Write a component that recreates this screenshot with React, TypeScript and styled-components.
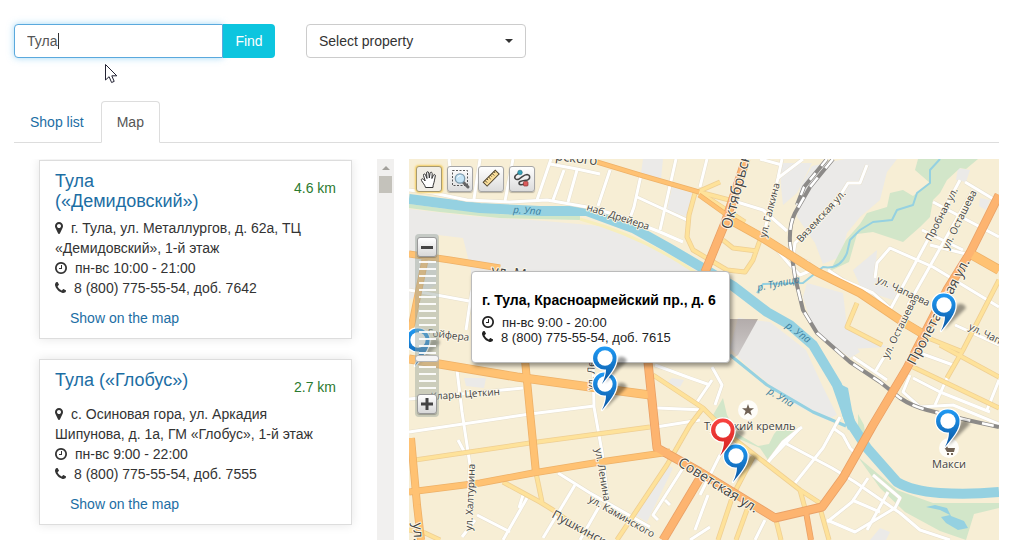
import React from 'react';
import styled, { createGlobalStyle } from 'styled-components';

const Global = createGlobalStyle`
  * { box-sizing: border-box; }
  body {
    margin: 0;
    background: #fff;
    color: #333;
    font: 14px/20px "Liberation Sans", Arial, sans-serif;
  }
  a { color: #1c6ea4; text-decoration: none; }
`;

const Page = styled.main`
  position: relative;
  padding: 24px 16px 15px 14px;
`;

const Filters = styled.form`
  display: flex;
  gap: 31px;
  margin-bottom: 43px;
`;

const SearchGroup = styled.div`
  position: relative;
  display: flex;
`;

const SearchInput = styled.input`
  width: 209px;
  height: 34px;
  padding: 6px 12px;
  border: 1px solid #5aa9dd;
  border-radius: 4px 0 0 4px;
  box-shadow: 0 0 7px rgba(102, 190, 240, 0.6);
  color: #555;
  font: inherit;
  outline: none;
`;

const TextCaret = styled.span`
  position: absolute;
  top: 9px;
  left: 44px;
  width: 1px;
  height: 16px;
  background: #333;
`;

const FindButton = styled.button`
  position: relative;
  width: 52px;
  height: 34px;
  padding: 0;
  border: 0;
  border-radius: 0 4px 4px 0;
  background: #0dc5df;
  color: #fff;
  font: inherit;
`;

const SelectBox = styled.div`
  position: relative;
  width: 220px;
`;

const Select = styled.select`
  width: 100%;
  height: 34px;
  padding: 6px 12px;
  border: 1px solid #ccc;
  border-radius: 4px;
  background: #fff;
  color: #333;
  font: inherit;
  appearance: none;
`;

const SelectArrow = styled.span`
  position: absolute;
  top: 15px;
  right: 13px;
  border: 4px solid transparent;
  border-top-color: #333;
  border-bottom: 0;
  pointer-events: none;
`;

const Pointer = styled.svg`
  position: absolute;
  top: 63px;
  left: 104px;
`;

const Tabs = styled.nav`
  display: flex;
  gap: 1px;
  margin-bottom: 16px;
  border-bottom: 1px solid #ddd;
`;

const Tab = styled.a<{ $active?: boolean }>`
  margin-bottom: -1px;
  padding: 10px 15px;
  border: 1px solid ${p => (p.$active ? '#ddd' : 'transparent')};
  border-bottom-color: ${p => (p.$active ? '#fff' : 'transparent')};
  border-radius: 4px 4px 0 0;
  color: ${p => (p.$active ? '#555' : '#1c6ea4')};
`;

const Content = styled.div`
  display: flex;
  gap: 15px;
  height: 381px;
`;

const ListPane = styled.section`
  display: flex;
  flex: 0 0 380px;
  overflow: hidden;
`;

const Cards = styled.div`
  display: flex;
  flex: 1;
  flex-direction: column;
  gap: 20px;
  padding: 1px 25px 0;
`;

const Card = styled.article`
  padding: 10px 15px;
  border: 1px solid #ddd;
  box-shadow: 0 0 10px rgba(0, 0, 0, 0.1);
`;

const CardHead = styled.header`
  display: flex;
  align-items: flex-start;
  justify-content: space-between;
  padding-bottom: 7px;
`;

const CardTitle = styled.h2`
  width: 180px;
  margin: 0;
  color: #1c6ea4;
  font-size: 18px;
  font-weight: 400;
  line-height: 20px;
`;

const Distance = styled.span`
  margin-top: 7px;
  color: #2b7a30;
`;

const Line = styled.p`
  margin: 0;
`;

const Icon = styled.svg`
  height: 14px;
  margin-right: 8px;
  fill: currentColor;
  vertical-align: -2px;
`;

const ShowLink = styled.a`
  display: block;
  margin-top: 10px;
  padding-left: 15px;
`;

const ScrollTrack = styled.div`
  display: flex;
  flex: 0 0 17px;
  flex-direction: column;
  align-items: center;
  gap: 6px;
  padding-top: 7px;
  background: #f1f0ef;
`;

const ScrollArrow = styled.span`
  border: 4px solid transparent;
  border-top: 0;
  border-bottom-color: #a3a19c;
`;

const ScrollThumb = styled.span`
  width: 13px;
  height: 17px;
  background: #c4c2bb;
`;

const MapPane = styled.section`
  position: relative;
  flex: 1;
  min-width: 0;
  overflow: hidden;
`;

const MapLayer = styled.svg`
  position: absolute;
  inset: 0;
  width: 100%;
  height: 100%;
  pointer-events: none;
  font-family: "Open Sans", "Noto Sans", sans-serif;
`;

const Toolbar = styled.div`
  position: absolute;
  top: 7px;
  left: 7px;
  display: flex;
  gap: 5px;
`;

const ToolButton = styled.button<{ $active?: boolean }>`
  width: 26px;
  height: 26px;
  padding: 0;
  border: 1px solid ${p => (p.$active ? '#a89a70' : '#a6a6a6')};
  border-radius: 3px;
  background: ${p => (p.$active ? '#f1eee6' : 'linear-gradient(#fff, #dcdcdc)')};
  box-shadow: ${p => (p.$active ? '0 0 2px 1px #f5cf63' : '0 1px 1px rgba(0, 0, 0, 0.25)')};
  svg { display: block; }
`;

const ZoomBar = styled.div`
  position: absolute;
  top: 75px;
  left: 6px;
  display: flex;
  flex-direction: column;
  align-items: center;
  width: 24px;
  padding: 3px 0;
  border-radius: 4px;
  background: rgba(150, 165, 155, 0.45);
`;

const ZoomButton = styled.button`
  width: 20px;
  height: 20px;
  padding: 0;
  border: 1px solid #999;
  border-radius: 3px;
  background: linear-gradient(#fff, #d8d8d8);
  box-shadow: 0 1px 1px rgba(0, 0, 0, 0.25);
  svg { display: block; }
`;

const ZoomRange = styled.input`
  width: 24px;
  height: 137px;
  margin: 0;
  appearance: none;
  writing-mode: vertical-lr;
  background: repeating-linear-gradient(
    transparent 0 4px, rgba(255, 255, 255, 0.9) 4px 6px, transparent 6px 7px
  ) center / 17px 100% no-repeat;
  &::-webkit-slider-thumb {
    appearance: none;
    width: 24px;
    height: 7px;
    border: 1px solid #b5b5b5;
    border-radius: 3px;
    background: #f4f4f4;
  }
`;

const Balloon = styled.div`
  position: absolute;
  top: 112px;
  left: 62px;
  width: 259px;
  padding: 19px 10px 17px;
  border: 1px solid #bbb;
  border-radius: 4px;
  background: #fff;
  box-shadow: 2px 3px 4px rgba(0, 0, 0, 0.4);
  color: #222;
  font-size: 13px;
  line-height: 15px;
  white-space: nowrap;
`;

const BalloonTitle = styled.h3`
  margin: 0 0 6px;
  color: #000;
  font-size: 14px;
  line-height: 18px;
`;

const MARKER =
  'M1152 640q0-106-75-181t-181-75-181 75-75 181 75 181 181 75 181-75 75-181zm256 0q0 109-33 179l-364 774q-16 33-47.5 52t-67.5 19-67.5-19-46.5-52l-365-774q-33-70-33-179 0-212 150-362t362-150 362 150 150 362z';
const CLOCK =
  'M1024 544v448q0 14-9 23t-23 9h-320q-14 0-23-9t-9-23v-64q0-14 9-23t23-9h224v-352q0-14 9-23t23-9h64q14 0 23 9t9 23zm416 352q0-148-73-273t-198-198-273-73-273 73-198 198-73 273 73 273 198 198 273 73 273-73 198-198 73-273zm224 0q0 209-103 385.5t-279.5 279.5-385.5 103-385.5-103-279.5-279.5-103-385.5 103-385.5 279.5-279.5 385.5-103 385.5 103 279.5 279.5 103 385.5z';
const PHONE =
  'M1408 1240q0 27-10 70.5t-21 68.5q-21 50-122 106-94 51-186 51-27 0-53-3.5t-57.5-12.5-47-14.5-55.5-20.5-49-18q-98-35-175-83-127-79-264-216t-216-264q-48-77-83-175-3-9-18-49t-20.5-55.5-14.5-47-12.5-57.5-3.5-53q0-92 51-186 56-101 106-122 25-11 68.5-21t70.5-10q14 0 21 3 18 6 53 76 11 19 30 54t35 63.5 31 53.5q3 4 17.5 25t21.5 35.5 7 28.5q0 20-28.5 50t-62 55-62 53-28.5 46q0 9 5 22.5t8.5 20.5 14 24 11.5 19q76 137 174 235t235 174q2 1 19 11.5t24 14 20.5 8.5 22.5 5q18 0 46-28.5t53-62 55-62 50-28.5q14 0 28.5 7t35.5 21.5 25 17.5q25 15 53.5 31t63.5 35 54 30q70 35 76 53 3 7 3 21z';

const MarkerIcon = () => <Icon viewBox="384 0 1024 1792" width="8" height="14"><path d={MARKER} /></Icon>;
const ClockIcon = () => <Icon viewBox="128 0 1536 1792" width="12" height="14"><path d={CLOCK} /></Icon>;
const PhoneIcon = () => <Icon viewBox="0 0 1408 1792" width="11" height="14"><path d={PHONE} /></Icon>;

interface Shop {
  name: string;
  distance: string;
  address: string;
  hours: string;
  phone: string;
}

const shops: Shop[] = [
  {
    name: 'Тула («Демидовский»)',
    distance: '4.6 km',
    address: 'г. Тула, ул. Металлургов, д. 62а, ТЦ «Демидовский», 1-й этаж',
    hours: 'пн-вс 10:00 - 21:00',
    phone: '8 (800) 775-55-54, доб. 7642',
  },
  {
    name: 'Тула («Глобус»)',
    distance: '2.7 km',
    address: 'с. Осиновая гора, ул. Аркадия Шипунова, д. 1а, ГМ «Глобус», 1-й этаж',
    hours: 'пн-вс 9:00 - 22:00',
    phone: '8 (800) 775-55-54, доб. 7555',
  },
];

const ShopCard = ({ shop }: { shop: Shop }) => (
  <Card>
    <CardHead>
      <CardTitle>{shop.name}</CardTitle>
      <Distance>{shop.distance}</Distance>
    </CardHead>
    <Line><MarkerIcon />{shop.address}</Line>
    <Line><ClockIcon />{shop.hours}</Line>
    <Line><PhoneIcon />{shop.phone}</Line>
    <ShowLink href="#map">Show on the map</ShowLink>
  </Card>
);

const VIEW = '409 159 590 381';

const grayAreas = [
  'M409 209L470 216 545 221 600 226 640 240 700 272 725 290H471V270L463 238 438 235 436 285 409 300Z',
  'M643 159H663L661 179 641 173Z',
  'M672 187L692 193 687 217 667 210Z',
  'M738 318L770 322 806 350 822 385 837 415 826 420 790 402 745 364 730 348Z',
  'M812 166L845 159H897L887 172 880 200 860 217 847 233 840 257 823 264 815 243 797 217 800 187Z',
  'M807 283L843 293 847 327 887 347 833 350 813 330 803 297Z',
  'M780 163H812L797 193 783 205 781 187Z',
  'M853 270L877 250 875 277 903 290 893 300 862 290Z',
  'M667 465L673 468 647 522 635 515Z',
  'M464 378L486 378 484 388 466 386Z',
  'M672 378L684 380 680 387 665 384Z',
  'M958 168L970 170 966 182 956 180Z',
  'M980 198L990 200 986 210 979 206Z',
  'M833 345H855L860 352 850 358Z',
  'M870 540L880 528 890 532 886 540Z',
];

const greenAreas = [
  'M867 213L887 207 890 193 903 190 913 196 930 183 915 170 918 159H978L966 169 960 168 947 180 940 193 933 200 930 217 920 227 903 242 873 232 857 234 849 262 830 271 846 240 860 224Z',
  'M723 398L713 415 722 426 737 438 760 448 768 460 795 429 780 427 774 434 769 444 758 446 738 434 727 415Z',
  'M858 457L897 490 933 503H999V508L974 514 966 540 940 531 905 512 880 488Z',
  'M858 414L864 425 866 440 858 430Z',
];

const whiteRoads = [
  'M433 193L467 200 510 202 547 200 587 207 617 215 660 232 683 242',
  'M409 190L433 193', 'M480 159L474 199', 'M513 159L505 201', 'M551 159L537 200', 'M564 170L553 200',
  'M577 170L568 202', 'M550 164L577 169 600 174', 'M610 170L598 206', 'M641 175L634 207 630 218',
  'M676 159L660 230', 'M637 197L687 220', 'M449 159L450 168',
  'M409 432L530 414 594 406', 'M409 399L523 388', 'M457 370L462 412 470 465 468 490', 'M458 440L466 455',
  'M593 360L594 407 602 452 608 500', 'M558 473L590 493 650 527', 'M575 485L543 538', 'M527 498L503 540',
  'M477 515L510 532', 'M462 537L475 520', 'M683 468L653 515 658 520', 'M665 500L670 505', 'M600 505L580 540',
  'M657 408L705 410', 'M656 427L700 420', 'M655 365L690 378 710 385', 'M712 380L697 402', 'M523 495L519 508',
  'M409 290L469 301', 'M472 290L466 330', 'M710 527L690 540', 'M708 495L695 530',
  'M782 159L778 178 763 237', 'M803 159L778 178', 'M760 159L782 165', 'M737 202L763 210 787 231', 'M707 159L700 187',
  'M867 165L860 183 848 183 833 207 795 243 793 257 808 262 812 270 800 275 790 265 767 238',
  'M828 270L843 280 873 293 890 308', 'M890 310L960 180', 'M908 305L973 190', 'M875 278L877 263 890 248 933 267 999 307',
  'M922 230L963 250', 'M933 202L999 237', 'M965 182L995 200', 'M955 325L999 345', 'M970 255L930 245',
  'M840 417L823 448 795 483', 'M802 427L783 442 768 462', 'M783 442L832 468 855 482 900 513 920 530 950 540', 'M833 428L843 435 850 448 857 455',
  'M873 475L900 498 895 508 855 532 827 520', 'M868 478L852 502 827 522', 'M888 492L867 530', 'M852 500L880 512',
  'M910 375L903 392 920 407 953 405 999 424', 'M913 378L940 392 990 412', 'M947 378L935 405', 'M999 380L987 410',
  'M920 353L953 365', 'M887 352L875 372', 'M853 357L887 380', 'M720 455L700 495', 'M712 367L722 385 715 405', 'M765 520L755 540', 'M800 428L768 462',
];

const yellowRoads = [
  'M415 460L530 443 650 427', 'M653 375L703 408 733 438 800 490 820 503', 'M703 408L690 425 667 465 617 540',
  'M503 482L540 502 553 510 595 540', 'M536 473L542 502', 'M695 193L689 215 687 237 693 250 710 260 727 270 745 272 753 260 760 240',
  'M723 240L733 248 757 251', 'M800 490L806 512', 'M820 508L829 540', 'M776 520L781 540', 'M753 457L733 495 718 540',
  'M748 507L736 540', 'M913 367L999 408', 'M999 280L963 350 947 378', 'M940 345L999 377', 'M857 303L847 327 882 345',
  'M923 336L963 352', 'M699 192L737 202', 'M409 530L425 533 440 540', 'M699 192L745 222', 'M695 193L720 182',
];

const orangeRoads = [
  ['M597 162L640 175 699 192', 4], ['M699 195L727 215', 4],
  ['M409 359L517 377 590 387 650 395', 8], ['M525 360L530 412 536 473', 7], ['M409 492L480 483 533 473 600 462 670 452', 6],
  ['M425 260L412 323 409 335', 6], ['M409 254L450 260 500 268', 6], ['M411 438L417 505 421 540', 7],
  ['M727 218L763 238 817 272 860 293 903 322 923 334', 8], ['M969 253L999 270', 9],
] as const;

const mainRoads = [
  ['M746 159L725 223 705 272', 8], ['M999 195L970 253 947 290 907 368 873 425 843 478 822 507 775 518 700 472', 8],
  ['M648 362L657 448 700 472', 8], ['M700 478L663 540', 8], ['M806 512L811 540', 5],
] as const;

const RAIL = 'M833 159L810 187 795 213Q789 225 790 243L795 277 803 310 817 333 850 362 880 382 900 398 Q912 406 927 410L967 420 999 427';
const RAIL_SIDE = 'M827 159L804 187 797 205';

const rivers = [
  ['M409 199L440 203 480 208 540 211 587 211 633 228 667 247 701 267 733 286 767 312 790 325 813 345 837 385 850 422 867 448 897 482Q912 491 940 493T999 492', 10],
  ['M730 355L767 385 813 412 846 426', 3],
  ['M940 159L930 170V183L917 193 913 205 897 210 892 220 873 222 860 230 850 240 847 253Q840 270 823 267L803 283 763 284 757 293', 2],
] as const;

interface LabelProps {
  from: [number, number];
  to: [number, number];
  size: number;
  water?: boolean;
  children: string;
}

/* A street name that runs from one point of the map towards another. */
const Label = ({ from, to, size, water, children }: LabelProps) => {
  const angle = (Math.atan2(to[1] - from[1], to[0] - from[0]) * 180) / Math.PI;
  return (
    <text
      transform={`translate(${from[0]} ${from[1]}) rotate(${angle})`}
      fontSize={size}
      fontStyle={water ? 'italic' : 'normal'}
      fill={water ? '#3c7f9e' : '#444'}
      stroke={water ? 'none' : '#fbf6e6'}
      strokeWidth="2"
      strokeLinejoin="round"
      paintOrder="stroke"
    >
      {children}
    </text>
  );
};

const BaseMap = () => (
  <MapLayer viewBox={VIEW} preserveAspectRatio="xMinYMin slice">
    <defs>
      <linearGradient id="cast" x1="0" y1="0" x2="0" y2="1">
        <stop offset="0" stopColor="#8d8282" stopOpacity="0.6" />
        <stop offset="1" stopColor="#8d8282" stopOpacity="0.25" />
      </linearGradient>
    </defs>
    <rect x="409" y="159" width="590" height="381" fill="#f7eed5" />
    {grayAreas.map(d => <path key={d} d={d} fill="#ebeae8" />)}
    {greenAreas.map(d => <path key={d} d={d} fill="#d2e6c9" />)}
    <path d="M409 206L440 210 500 216 580 218" fill="none" stroke="#cfe6c8" strokeWidth="4" />
    <path d="M580 219Q640 235 695 272" fill="none" stroke="#f7eebc" strokeWidth="3" />
    <g fill="none" strokeLinejoin="round">
      {rivers.map(([d, w]) => <path key={d} d={d} stroke="#95d1e1" strokeWidth={w} />)}
      <path d="M838 383L848 388 852 410 856 425 848 430 842 415Z" fill="#95d1e1" />
      <path d="M926 507L935 505 947 508 951 516 964 521 968 528 958 530 946 523 941 517 950 515 940 510Z" fill="#95d1e1" />
      <g stroke="#e6dfcc" strokeWidth="4">{whiteRoads.map(d => <path key={d} d={d} />)}</g>
      <g stroke="#fff" strokeWidth="3">{whiteRoads.map(d => <path key={d} d={d} />)}</g>
      <g stroke="#efcf93" strokeWidth="5">{yellowRoads.map(d => <path key={d} d={d} />)}</g>
      <g stroke="#fee29a" strokeWidth="3.4">{yellowRoads.map(d => <path key={d} d={d} />)}</g>
      <path d={RAIL_SIDE} stroke="#8c8a88" strokeWidth="4" />
      <path d={RAIL_SIDE} stroke="#fff" strokeWidth="2.4" strokeDasharray="9 9" />
      <path d={RAIL} stroke="#8c8a88" strokeWidth="4" />
      <path d={RAIL} stroke="#fff" strokeWidth="2.6" strokeDasharray="12 12" />
      {orangeRoads.map(([d, w]) => <path key={d} d={d} stroke="#eeb168" strokeWidth={w + 1} />)}
      {mainRoads.map(([d, w]) => <path key={d} d={d} stroke="#e9a066" strokeWidth={w + 1} />)}
      {orangeRoads.map(([d, w]) => <path key={d} d={d} stroke="#ffc273" strokeWidth={w - 0.6} />)}
      {mainRoads.map(([d, w]) => <path key={d} d={d} stroke="#fdb470" strokeWidth={w - 0.6} />)}
    </g>

    <Label from={[555, 160]} to={[595, 165]} size={13}>рского</Label>
    <Label from={[513, 213]} to={[543, 215]} size={10} water>р. Упа</Label>
    <Label from={[586, 210]} to={[648, 230]} size={10}>наб. Дрейера</Label>
    <Label from={[731, 230]} to={[750, 158]} size={15}>Октябрьск</Label>
    <Label from={[766, 238]} to={[780, 183]} size={10}>ул. Галкина</Label>
    <Label from={[801, 243]} to={[846, 194]} size={10}>Вяземская ул.</Label>
    <Label from={[931, 242]} to={[958, 190]} size={10}>Пробная ул.</Label>
    <Label from={[948, 250]} to={[977, 192]} size={10}>ул. Осташева</Label>
    <Label from={[876, 282]} to={[927, 306]} size={10}>ул. Чапаева</Label>
    <Label from={[888, 359]} to={[916, 302]} size={10}>ул. Осташева</Label>
    <Label from={[968, 329]} to={[1003, 346]} size={10}>ул. Чапаева</Label>
    <Label from={[915, 366]} to={[971, 260]} size={14}>Пролетарская ул.</Label>
    <Label from={[491, 275]} to={[531, 280]} size={14}>ул. Металлистов</Label>
    <Label from={[427, 336]} to={[469, 341]} size={10}>Гойфера</Label>
    <Label from={[431, 400]} to={[500, 395]} size={10}>Клары Цеткин</Label>
    <Label from={[472, 531]} to={[475, 463]} size={10}>ул. Халтурина</Label>
    <Label from={[595, 449]} to={[604, 502]} size={10}>ул. Ленина</Label>
    <Label from={[594, 390]} to={[595, 350]} size={10}>ул. Ленина</Label>
    <Label from={[588, 501]} to={[649, 536]} size={10}>ул. Каминского</Label>
    <Label from={[551, 517]} to={[595, 541]} size={12}>Пушкинская</Label>
    <Label from={[413, 523]} to={[415, 560]} size={14}>ул.</Label>
    <Label from={[677, 465]} to={[756, 514]} size={14}>Советская ул.</Label>
    <Label from={[758, 291]} to={[802, 282]} size={10} water>р. Тулица</Label>
    <Label from={[785, 327]} to={[810, 345]} size={10} water>р. Упа</Label>
    <Label from={[767, 393]} to={[794, 409]} size={10} water>р. Упа</Label>

    <circle cx="748" cy="410" r="10" fill="#fff" opacity="0.85" />
    <path d="M748 404l1.5 4.3h4.5l-3.6 2.7 1.4 4.4-3.8-2.7-3.8 2.7 1.4-4.4-3.6-2.7h4.5z" fill="#6f6154" />
    <Label from={[704, 430]} to={[800, 430]} size={11}>Тульский кремль</Label>
    <circle cx="949" cy="448" r="10" fill="#fff" opacity="0.85" />
    <path d="M944 447l1-1h2l1 2h7l-1 4h-7zM947 453h2v2h-2zM951 453h2v2h-2z" fill="#6f6154" />
    <Label from={[932, 468]} to={[980, 468]} size={11}>Макси</Label>

    <path d="M728 319H758L738 355 728 362Z" fill="url(#cast)" />
  </MapLayer>
);

interface PinProps {
  x: number;
  y: number;
  red?: boolean;
}

const TEARDROP = 'M0-11.5A11.500 11.500 0 0 1 11.500 0C12 9 4 17 -3 26Q1 18 1 11.400A11.500 11.500 0 1 1 0-11.500Z';

const Pin = ({ x, y, red }: PinProps) => (
  <g transform={`translate(${x} ${y})`}>
    <path d="M0 25L22 3Q20 -2 14 -1L8 8Z" fill="#000" opacity="0.38" filter="url(#soft)" />
    <path
      d={TEARDROP}
      fill={red ? 'url(#red)' : 'url(#blue)'}
      stroke="#fff"
      strokeWidth="2.4"
      strokeLinejoin="round"
      paintOrder="stroke"
    />
    <circle r="7.700" fill="#fff" />
  </g>
);

const pins: PinProps[] = [
  { x: 605, y: 384 },
  { x: 605, y: 358 },
  { x: 944, y: 305 },
  { x: 948, y: 421 },
  { x: 736, y: 456 },
  { x: 723, y: 430, red: true },
  { x: 418, y: 340 },
];

const PinLayer = () => (
  <MapLayer viewBox={VIEW} preserveAspectRatio="xMinYMin slice">
    <defs>
      <filter id="soft" x="-30%" y="-30%" width="160%" height="160%"><feGaussianBlur stdDeviation="1.6" /></filter>
      <linearGradient id="blue" x1="0" y1="0" x2="0" y2="1">
        <stop offset="0" stopColor="#1f9af5" /><stop offset="1" stopColor="#0a559f" />
      </linearGradient>
      <linearGradient id="red" x1="0" y1="0" x2="0" y2="1">
        <stop offset="0" stopColor="#f9433f" /><stop offset="1" stopColor="#d3211f" />
      </linearGradient>
    </defs>
    {pins.map(p => <Pin key={`${p.x}-${p.y}`} {...p} />)}
  </MapLayer>
);

const HandIcon = () => (
  <svg width="24" height="24" viewBox="0 0 24 24">
    <path
      d="M8.500 20.500C8 18 5.500 15.500 4.500 13.500c-.7-1.600.9-2.300 2-1.200l1.700 1.700L6.500 8.500c-.5-1.700 1.400-2.200 2-.7L10 11.500 9.600 6c0-1.700 2-1.700 2.200 0l.5 5 .8-4.800c.4-1.500 2.200-1.200 2.100.4L14.900 11.500l1.500-3.300c.7-1.300 2.200-.7 1.900.7-.5 2.600-1 6-1.800 8.200-.4 1.200-.6 2.100-.5 3.400z"
      fill="#fff" stroke="#333" strokeWidth="1"
    />
  </svg>
);

const MagnifierIcon = () => (
  <svg width="24" height="24" viewBox="0 0 24 24">
    <rect x="4.500" y="3.500" width="15" height="15" fill="none" stroke="#555" strokeDasharray="2 1.500" />
    <path d="M15 15l5 5" stroke="#666" strokeWidth="3" strokeLinecap="round" />
    <circle cx="12" cy="11.500" r="4.700" fill="#c5e5f7" stroke="#7c99aa" strokeWidth="1.300" />
    <path d="M9.500 10.500q1-2 3-2" stroke="#fff" fill="none" />
  </svg>
);

const RulerIcon = () => (
  <svg width="24" height="24" viewBox="0 0 24 24">
    <g transform="rotate(-45 12 11)">
      <rect x="3.500" y="8.500" width="17" height="5.500" fill="#fbdf9a" stroke="#51452d" />
      <path d="M6 8.500v3M8.500 8.500v2M11 8.500v3M13.500 8.500v2M16 8.500v3M18.500 8.500v2" stroke="#51452d" strokeWidth="0.900" />
    </g>
  </svg>
);

const RouteIcon = () => (
  <svg width="24" height="24" viewBox="0 0 24 24">
    <path
      d="M9 6L5.500 8.500C3.500 11 6 13.500 9 12c3-1.600 5-4.500 8-4.500 3.500.5 3.500 4.500.5 5.500-3 .8-8 .2-8.500 2.800-.2 2.500 3 2.200 5.500 1.200"
      fill="none" stroke="#444" strokeWidth="1.500"
    />
    <circle cx="10" cy="5.500" r="2.300" fill="#35a2b8" stroke="#206a7a" strokeWidth="0.600" />
    <rect x="13.500" y="14.500" width="4.500" height="4.500" rx="1" fill="#db5a5a" stroke="#8a3434" strokeWidth="0.700" />
  </svg>
);

const App = () => (
  <>
    <Global />
    <Page>
      <Filters>
        <SearchGroup>
          <SearchInput type="text" aria-label="City" defaultValue="Тула" />
          <TextCaret />
          <FindButton type="button">Find</FindButton>
        </SearchGroup>
        <SelectBox>
          <Select aria-label="Select property">
            <option>Select property</option>
          </Select>
          <SelectArrow />
        </SelectBox>
      </Filters>
      <Tabs>
        <Tab href="#list">Shop list</Tab>
        <Tab href="#map" $active>Map</Tab>
      </Tabs>
      <Content>
        <ListPane>
          <Cards>
            {shops.map(shop => <ShopCard key={shop.name} shop={shop} />)}
          </Cards>
          <ScrollTrack aria-hidden="true">
            <ScrollArrow />
            <ScrollThumb />
          </ScrollTrack>
        </ListPane>
        <MapPane id="map">
          <BaseMap />
          <Balloon>
            <BalloonTitle>г. Тула, Красноармейский пр., д. 6</BalloonTitle>
            <Line><ClockIcon />пн-вс 9:00 - 20:00</Line>
            <Line><PhoneIcon />8 (800) 775-55-54, доб. 7615</Line>
          </Balloon>
          <PinLayer />
          <Toolbar>
            <ToolButton type="button" aria-label="Pan" $active><HandIcon /></ToolButton>
            <ToolButton type="button" aria-label="Zoom to area"><MagnifierIcon /></ToolButton>
            <ToolButton type="button" aria-label="Ruler"><RulerIcon /></ToolButton>
            <ToolButton type="button" aria-label="Route"><RouteIcon /></ToolButton>
          </Toolbar>
          <ZoomBar>
            <ZoomButton type="button" aria-label="Zoom out">
              <svg width="18" height="18"><path d="M3 9.500h12" stroke="#444" strokeWidth="3" /></svg>
            </ZoomButton>
            <ZoomRange type="range" aria-label="Zoom" min="0" max="100" defaultValue="75" />
            <ZoomButton type="button" aria-label="Zoom in">
              <svg width="18" height="18"><path d="M3 9h12M9 3v12" stroke="#444" strokeWidth="3" /></svg>
            </ZoomButton>
          </ZoomBar>
        </MapPane>
      </Content>
      <Pointer width="16" height="22" viewBox="0 0 16 22">
        <path d="M1.500 1.500V17l3.600-3.300 2.500 5.800 2.600-1.100-2.400-5.600h5z" fill="#fff" stroke="#223" />
      </Pointer>
    </Page>
  </>
);

export default App;
